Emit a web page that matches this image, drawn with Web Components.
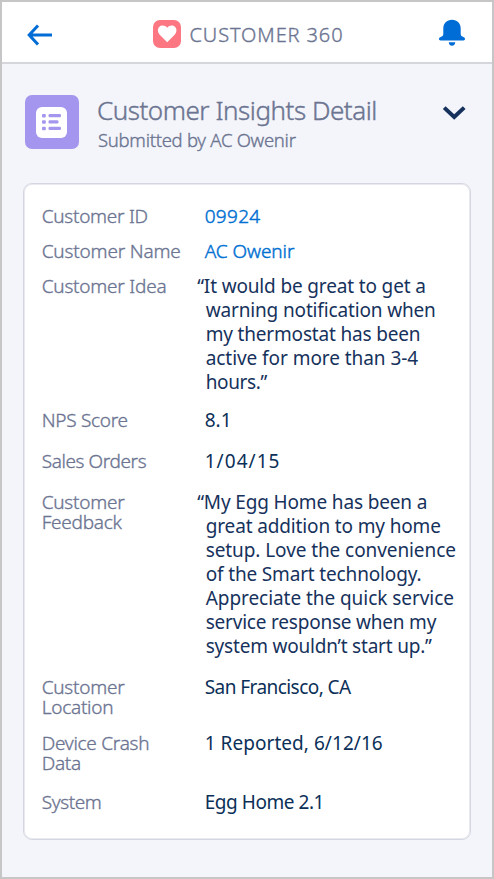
<!DOCTYPE html>
<html lang="en">
<head>
<meta charset="utf-8">
<title>Customer 360</title>
<style>
html, body { margin: 0; height: 100%; }
body { font-family: "Noto Sans", "Open Sans", sans-serif; color: #16325c; }
</style>
</head>
<body>
<insight-app></insight-app>
<script>
class BaseElement extends HTMLElement {
  connectedCallback() {
    if (!this.shadowRoot) this.attachShadow({ mode: 'open' }).innerHTML = this.render();
  }
}

/* Text with its own tracking; line breaks in the content are kept */
customElements.define('text-line', class extends BaseElement {
  render() {
    return `<style>
      :host { display: block; white-space: pre; letter-spacing: ${this.getAttribute('tracking') || 0}px; }
      :host([quote]) { margin-left: -8.500px; }
    </style><slot></slot>`;
  }
});

customElements.define('app-header', class extends BaseElement {
  render() {
    return `<style>
      :host { display: grid; grid-template-columns: 1fr auto 1fr; align-items: center; height: 60px; padding: 0 26px 0 25px;
        box-sizing: content-box; background: #fff; border-bottom: 2px solid #d4d6dc; }
      svg { display: block; }
      .brand { display: flex; align-items: center; gap: 9px; padding: 4px 0 0 3px; color: #6b7491; font-weight: 300; -webkit-text-stroke: .35px #6b7491; font-size: 20px; line-height: 28px; }
      .words { padding-top: 1px; line-height: 27px; }
      .bell { justify-self: end; margin-top: 2px; }
      .back { margin-top: 5px; }
    </style>
    <svg class="back" width="28" height="24" viewBox="0 0 28 24" fill="none" stroke="#006dd6" stroke-width="3"><path d="M11 2.500 2.200 12l8.800 9.500M2.500 12h22.500"/></svg>
    <div class="brand">
      <svg width="28" height="28" viewBox="0 0 28 28"><rect width="28" height="28" rx="7" fill="#fc7781"/><path d="M14.200 22.300 7 14.900C4.600 12.300 4.200 9 6.200 6.900c2.300-2.300 6.100-1.700 8 .9 1.900-2.600 5.700-3.200 7.900-.9 2.100 2.100 1.700 5.400-.7 8z" fill="#fff"/></svg>
      <div class="words"><slot></slot></div>
    </div>
    <svg class="bell" width="28" height="28" viewBox="0 0 28 28" fill="#006dd6"><path d="M14 .8c5.200 0 8.700 3.600 8.700 8.700v5c0 2 .7 2.700 2.200 3.300 1.200.5 2.100 1 2.100 2.200 0 1-.6 1.400-1.600 1.400H2.600c-1 0-1.600-.4-1.600-1.400 0-1.200.9-1.700 2.100-2.200 1.500-.6 2.200-1.300 2.200-3.300v-5C5.300 4.400 8.800.8 14 .8z"/><path d="M10.800 23.200h6.400c0 2-1.300 3.500-3.200 3.500s-3.200-1.500-3.200-3.500z"/></svg>`;
  }
});

customElements.define('record-heading', class extends BaseElement {
  render() {
    return `<style>
      :host { display: flex; align-items: flex-start; padding: 31px 26px 0 23px; height: 88px; color: #6b7491; font-weight: 300; -webkit-text-stroke: .35px #6b7491; }
      svg { display: block; flex: none; }
      .words { flex: 1; padding-left: 18px; }
      .title { font-size: 26px; line-height: 30px; -webkit-text-stroke-width: .4px; }
      .sub { font-size: 18.5px; line-height: 24px; padding: 3px 0 0 1px; }
      .chev { margin-top: 10px; }
    </style>
    <svg width="54" height="54" viewBox="0 0 54 54"><rect width="54" height="54" rx="7" fill="#a496ee"/><rect x="11" y="12" width="31" height="31" rx="6" fill="#fff"/>
      <g fill="#a496ee"><rect x="17" y="19" width="3.800" height="3.500" rx="1"/><rect x="17" y="25.200" width="3.800" height="3.500" rx="1"/><rect x="17" y="31.700" width="3.800" height="3.500" rx="1"/>
      <rect x="23.500" y="19" width="12.500" height="3.200" rx="1.200"/><rect x="23.500" y="25.300" width="10" height="3.200" rx="1.200"/><rect x="23.500" y="31.800" width="12.500" height="3.200" rx="1.200"/></g></svg>
    <div class="words"><div class="title"><slot name="title"></slot></div><div class="sub"><slot name="sub"></slot></div></div>
    <svg class="chev" width="24" height="16" viewBox="0 0 24 16" fill="none" stroke="#16325c" stroke-width="4"><path d="M2.200 2.600 12.200 12l10-9.400"/></svg>`;
  }
});

customElements.define('detail-card', class extends BaseElement {
  render() {
    return `<style>
      :host { display: block; margin: 0 21px; height: 657px; box-sizing: border-box; padding: 20px 0 0 17.700px;
        background: #fff; border: 1px solid #d5d7e0; box-shadow: inset 0 0 0 1px #e9eaf0; border-radius: 9px; font-size: 19px; }
    </style><slot></slot>`;
  }
});

customElements.define('detail-row', class extends BaseElement {
  render() {
    return `<style>
      :host { display: grid; grid-template-columns: 163px 1fr; margin-bottom: 17px; }
      :host([dense]) { margin-bottom: 11px; }
      :host([snug]) { margin-bottom: 14px; }
      .label { padding-top: 2px; line-height: 20px; color: #6b7491; font-weight: 300; -webkit-text-stroke: .35px #6b7491; }
      .value { line-height: 24px; color: #0b3058; }
      :host([link]) .value { color: #0070d2; font-weight: 300; -webkit-text-stroke: .45px #0070d2; }
      :host([long]) .value { padding-left: 1px; color: #16325c; }
    </style>
    <div class="label"><slot name="label"></slot></div><div class="value"><slot></slot></div>`;
  }
});

customElements.define('insight-app', class extends BaseElement {
  render() {
    return `<style>
      :host { display: block; box-sizing: border-box; height: 879px; border: 2px solid #c6c6c6; background: #f4f5fa; overflow: hidden; }
    </style>
    <app-header><text-line tracking=".88">CUSTOMER 360</text-line></app-header>
    <record-heading><text-line slot="title" tracking="-.47">Customer Insights Detail</text-line><text-line slot="sub" tracking="-.28">Submitted by AC Owenir</text-line></record-heading>
    <detail-card>
      <detail-row dense link><text-line slot="label" tracking="-.27">Customer ID</text-line><text-line tracking=".3">09924</text-line></detail-row>
      <detail-row dense link><text-line slot="label" tracking="-.17">Customer Name</text-line><text-line tracking="-.06">AC Owenir</text-line></detail-row>
      <detail-row snug long><text-line slot="label" tracking="-.22">Customer Idea</text-line>
        <text-line quote tracking="-.15">“It would be great to get a</text-line><text-line tracking="-.15">warning notification when</text-line><text-line tracking="-.18">my thermostat has been</text-line><text-line tracking="-.06">active for more than 3-4</text-line><text-line tracking="-.35">hours.”</text-line></detail-row>
      <detail-row><text-line slot="label" tracking="-.27">NPS Score</text-line><text-line>8.1</text-line></detail-row>
      <detail-row><text-line slot="label" tracking="-.4">Sales Orders</text-line><text-line tracking="1.05">1/04/15</text-line></detail-row>
      <detail-row long><text-line slot="label" tracking="-.25">Customer
Feedback</text-line>
        <text-line quote tracking="-.15">“My Egg Home has been a</text-line><text-line tracking="-.14">great addition to my home</text-line><text-line tracking="-.085">setup. Love the convenience</text-line><text-line tracking="-.16">of the Smart technology.</text-line><text-line tracking="-.056">Appreciate the quick service</text-line><text-line tracking="-.21">service response when my</text-line><text-line tracking="-.2">system wouldn’t start up.”</text-line></detail-row>
      <detail-row snug><text-line slot="label" tracking="-.25">Customer
Location</text-line><text-line tracking="-.56">San Francisco, CA</text-line></detail-row>
      <detail-row><text-line slot="label" tracking="-.27">Device Crash
Data</text-line><text-line tracking=".05">1 Reported, 6/12/16</text-line></detail-row>
      <detail-row><text-line slot="label" tracking="-.4">System</text-line><text-line tracking="-.45">Egg Home 2.1</text-line></detail-row>
    </detail-card>`;
  }
});
</script>
</body>
</html>
